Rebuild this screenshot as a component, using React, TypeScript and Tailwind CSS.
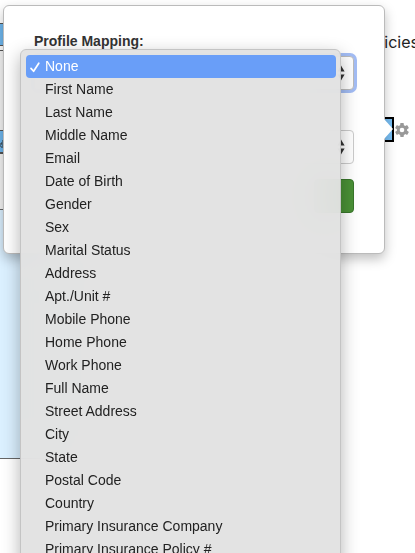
import { useState } from 'react';

const profileFields = [
  'None',
  'First Name',
  'Last Name',
  'Middle Name',
  'Email',
  'Date of Birth',
  'Gender',
  'Sex',
  'Marital Status',
  'Address',
  'Apt./Unit #',
  'Mobile Phone',
  'Home Phone',
  'Work Phone',
  'Full Name',
  'Street Address',
  'City',
  'State',
  'Postal Code',
  'Country',
  'Primary Insurance Company',
  'Primary Insurance Policy #',
];

const GearIcon = () => (
  <svg viewBox="0 0 14 14" className="size-3.5" aria-hidden="true">
    <g fill="#999999">
      {[0, 60, 120].map((angle) => (
        <rect
          key={angle}
          x="5.2"
          y="0"
          width="3.6"
          height="14"
          rx="0.7"
          transform={`rotate(${angle} 7 7)`}
        />
      ))}
      <circle cx="7" cy="7" r="5.2" />
    </g>
    <circle cx="7" cy="7" r="2.3" fill="#ffffff" />
  </svg>
);

const CheckIcon = () => (
  <svg viewBox="0 0 12 12" className="size-3" aria-hidden="true">
    <path
      d="M2 7.4 4.6 10.3 9.8 2.2"
      fill="none"
      stroke="currentColor"
      strokeWidth="1.7"
      strokeLinecap="round"
      strokeLinejoin="round"
    />
  </svg>
);

const SortArrows = () => (
  <svg
    viewBox="0 0 10 16"
    className="pointer-events-none absolute top-1/2 right-2 h-4 w-2.5 -translate-y-1/2"
    aria-hidden="true"
  >
    <path d="M5 0.5 8.6 6.5H1.4zM5 15.5 1.4 9.5h7.2z" fill="#333333" />
  </svg>
);

// the document being edited, most of it sits under the popover
const DocumentPage = () => (
  <div className="flex items-start justify-between">
    <div className="w-20 border-b border-[#666666]">
      <div className="mt-[23px] h-[23px] border-y border-[#555555] bg-[#6fb7ee]" />
      <div className="mt-1 h-20 border-t border-[#555555] bg-[#f4f4f4]" />
      <div className="h-6 border-y border-b-2 border-[#555555] bg-[#6fb7ee]">
        <svg viewBox="0 0 4 20" className="h-5 w-1" aria-hidden="true">
          <path
            d="M3 9v2M2 11v2M1 12v2M3 13v2M0 14v2M2 15v2"
            stroke="#333333"
            strokeWidth="1"
          />
        </svg>
      </div>
      <div className="h-14 border-b border-[#666666] bg-[#f4f4f4]" />
      <div className="h-[248px] bg-[#dbf0ff]" />
    </div>
    <div className="flex flex-col items-end pt-8">
      <p className="-mr-1 font-[Inter,sans-serif] text-base leading-5 text-[#222222]">
        Policies
      </p>
      <div className="flex items-center gap-px pt-[65px] pr-1.5">
        <div className="h-[25px] w-20 border-2 border-black bg-[#77bdf2]" />
        <button type="button" aria-label="Field settings">
          <GearIcon />
        </button>
      </div>
    </div>
  </div>
);

export default function App() {
  const [selected, setSelected] = useState('None');

  return (
    <div className="relative h-screen overflow-hidden bg-white font-['Liberation_Sans',Arial,sans-serif]">
      <DocumentPage />

      <form className="absolute top-[5px] right-[30px] left-[3px] rounded-md border border-[#bbbbbb] bg-white px-[30px] pt-[25px] pb-10 shadow-[0_5px_12px_rgba(0,0,0,0.25)]">
        <label
          htmlFor="profile-mapping"
          className="block text-sm leading-5 font-bold text-[#333333]"
        >
          Profile Mapping:
        </label>
        <div className="relative mt-[5px]">
          <select
            id="profile-mapping"
            value={selected}
            onChange={({ currentTarget: { value } }) => setSelected(value)}
            className="block h-[34px] w-full appearance-none rounded-sm border border-[#bbbbbb] bg-white text-transparent ring-3 ring-[#a3bdf5]"
          >
            {profileFields.map((field) => (
              <option key={field}>{field}</option>
            ))}
          </select>
          <SortArrows />
        </div>
        <div className="relative mt-10">
          <select
            aria-label="Format"
            className="block h-[34px] w-full appearance-none rounded-sm border border-[#cccccc] bg-white"
          />
          <SortArrows />
        </div>
        <div className="mt-[15px] flex justify-end">
          <button
            type="button"
            aria-label="Save"
            className="h-[34px] w-10 rounded-sm border border-[#39762b] bg-[#4a9136]"
          />
        </div>
        <svg
          viewBox="0 0 9 20"
          className="absolute top-[113px] -right-[9px] h-5 w-[9px]"
          aria-hidden="true"
        >
          <path d="M0 0 9 10 0 20z" fill="#ffffff" />
        </svg>
      </form>

      <ul
        role="listbox"
        aria-label="Profile Mapping"
        className="absolute top-[49px] right-[74px] left-5 rounded-md border border-[#c4c4c4] bg-[#e2e2e2]/95 py-[5px] pr-1 pl-[5px] shadow-[0_6px_18px_rgba(0,0,0,0.3)] backdrop-blur-xl"
      >
        {profileFields.map((field) => (
          <li key={field} role="option" aria-selected={field === selected}>
            <button
              type="button"
              onClick={() => setSelected(field)}
              className={
                field === selected
                  ? 'flex h-[23px] w-full items-center rounded-sm bg-[#699ef8] pb-0.5 text-sm text-white'
                  : 'flex h-[23px] w-full items-center rounded-sm pb-0.5 text-sm text-[#222222]'
              }
            >
              <span className="flex w-[19px] pt-0.5 pl-[3px]">
                {field === selected && <CheckIcon />}
              </span>
              {field}
            </button>
          </li>
        ))}
      </ul>
    </div>
  );
}
